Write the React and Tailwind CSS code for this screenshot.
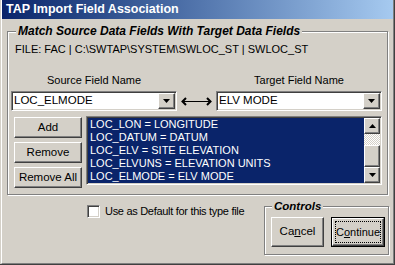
import React from 'react';

const raised =
  'bg-[#d4d0c8] border border-t-white border-l-white border-b-[#404040] border-r-[#404040] shadow-[inset_-1px_-1px_0_#808080]';
const sunken =
  'border border-t-[#808080] border-l-[#808080] border-b-white border-r-white shadow-[inset_1px_1px_0_#404040,inset_-1px_-1px_0_#d4d0c8]';
const etched = 'relative border border-[#808080] shadow-[inset_1px_1px_0_white,1px_1px_0_white]';

const DownArrow = () => (
  <svg width="7" height="4" viewBox="0 0 7 4">
    <path d="M0 0h7L3.5 4z" fill="black" />
  </svg>
);

const UpArrow = () => (
  <svg width="7" height="4" viewBox="0 0 7 4">
    <path d="M0 4h7L3.5 0z" fill="black" />
  </svg>
);

const Combo = ({ value }) => (
  <div className={`${sunken} w-[166px] h-[20px] bg-white flex items-center`}>
    <span className="flex-1 pl-[2px] text-[11.5px] leading-none">{value}</span>
    <div className={`${raised} w-[17px] h-[16px] mr-[1px] flex items-center justify-center`}>
      <DownArrow />
    </div>
  </div>
);

const Button = ({ children, className = '' }) => (
  <div className={`${raised} flex items-center justify-center text-[11.5px] ${className}`}>{children}</div>
);

const rows = [
  'LOC_LON = LONGITUDE',
  'LOC_DATUM = DATUM',
  'LOC_ELV = SITE ELEVATION',
  'LOC_ELVUNS = ELEVATION UNITS',
  'LOC_ELMODE = ELV MODE',
];

export default function App() {
  return (
    <div className="w-[395px] h-[265px] bg-[#d4d0c8] flex flex-col border-r border-b border-r-[#404040] border-b-[#404040] font-['Liberation_Sans',Arial,sans-serif] text-black select-none">
      <div className="flex-1 flex flex-col border-l border-r border-b border-l-white border-r-[#808080] border-b-[#808080] ml-[1px]">
        {/* title bar */}
        <div className="h-[19px] bg-gradient-to-r from-[#0a246a] to-[#a6caf0] flex items-center pl-[4px] text-white font-bold text-[12.5px]">
          TAP Import Field Association
        </div>

        {/* main group */}
        <div className={`${etched} ml-[5px] mt-[12px] w-[381px] h-[164px] pl-[7px] pt-[10px]`}>
          <div className="absolute left-[8px] top-[-8px] px-[2px] bg-[#d4d0c8] font-bold italic text-[12px] leading-[14px]">
            Match Source Data Fields With Target Data Fields
          </div>
          <div className="text-[11px] leading-[14px] whitespace-nowrap">
            FILE: FAC | C:\SWTAP\SYSTEM\SWLOC_ST | SWLOC_ST
          </div>

          <div className="flex mt-[17px] -ml-[4px] text-[11px] leading-[14px]">
            <div className="w-[166px] text-center">Source Field Name</div>
            <div className="w-[39px]" />
            <div className="w-[166px] text-center">Target Field Name</div>
          </div>

          <div className="flex items-center mt-[4px] -ml-[4px]">
            <Combo value="LOC_ELMODE" />
            <div className="w-[39px] flex justify-center">
              <svg width="31" height="9" viewBox="0 0 31 9">
                <path d="M5 1L1.5 4.5L5 8" stroke="black" strokeWidth="2" fill="none" />
                <path d="M26 1L29.5 4.5L26 8" stroke="black" strokeWidth="2" fill="none" />
                <path d="M3 4.5h25" stroke="black" strokeWidth="1" />
              </svg>
            </div>
            <Combo value="ELV MODE" />
          </div>

          <div className="flex mt-[5px] -ml-[1px]">
            <div className="flex flex-col gap-[4px] mt-[1px]">
              <Button className="w-[68px] h-[21px]">Add</Button>
              <Button className="w-[68px] h-[21px]">Remove</Button>
              <Button className="w-[68px] h-[21px]">Remove All</Button>
            </div>
            <div className={`${sunken} ml-[4px] w-[296px] h-[69px] flex p-[1px] bg-[#0a246a]`}>
              <div className="flex-1 text-white text-[11px] leading-[13px] pl-[2px]">
                {rows.map((r) => (
                  <div key={r} className="h-[13px] whitespace-nowrap">{r}</div>
                ))}
              </div>
              <div className="w-[16px] flex flex-col">
                <div className={`${raised} h-[16px] flex items-center justify-center`}>
                  <UpArrow />
                </div>
                <div className="h-[11px] bg-[repeating-conic-gradient(#ffffff_0_25%,#d4d0c8_0_50%)] bg-[length:2px_2px]" />
                <div className={`${raised} h-[22px]`} />
                <div className="flex-1 bg-[repeating-conic-gradient(#ffffff_0_25%,#d4d0c8_0_50%)] bg-[length:2px_2px]" />
                <div className={`${raised} h-[16px] flex items-center justify-center`}>
                  <DownArrow />
                </div>
              </div>
            </div>
          </div>
        </div>

        {/* bottom row */}
        <div className="flex items-start ml-[85px]">
          <div className="flex items-center mt-[9px]">
            <div className={`${sunken} w-[13px] h-[13px] bg-white`} />
            <span className="ml-[5px] text-[11px] tracking-[-0.3px] leading-[14px] whitespace-nowrap">
              Use as Default for this type file
            </span>
          </div>
          <div className={`${etched} ml-auto mr-[4px] mt-[11px] w-[125px] h-[49px] flex gap-[7px] pl-[6px] pt-[10px]`}>
            <div className="absolute left-[7px] top-[-8px] px-[2px] bg-[#d4d0c8] font-bold italic text-[11.5px] leading-[14px]">
              Controls
            </div>
            <Button className="w-[53px] h-[30px]">
              <span>
                Ca<span className="underline">n</span>cel
              </span>
            </Button>
            <div className="w-[54px] h-[30px] border border-black">
              <div className={`${raised} w-full h-full flex items-center justify-center text-[11px] p-[2px]`}>
                <div className="w-full h-full border border-dotted border-black flex items-center justify-center">
                  <span>
                    C<span className="underline">o</span>ntinue
                  </span>
                </div>
              </div>
            </div>
          </div>
        </div>
      </div>
    </div>
  );
}
